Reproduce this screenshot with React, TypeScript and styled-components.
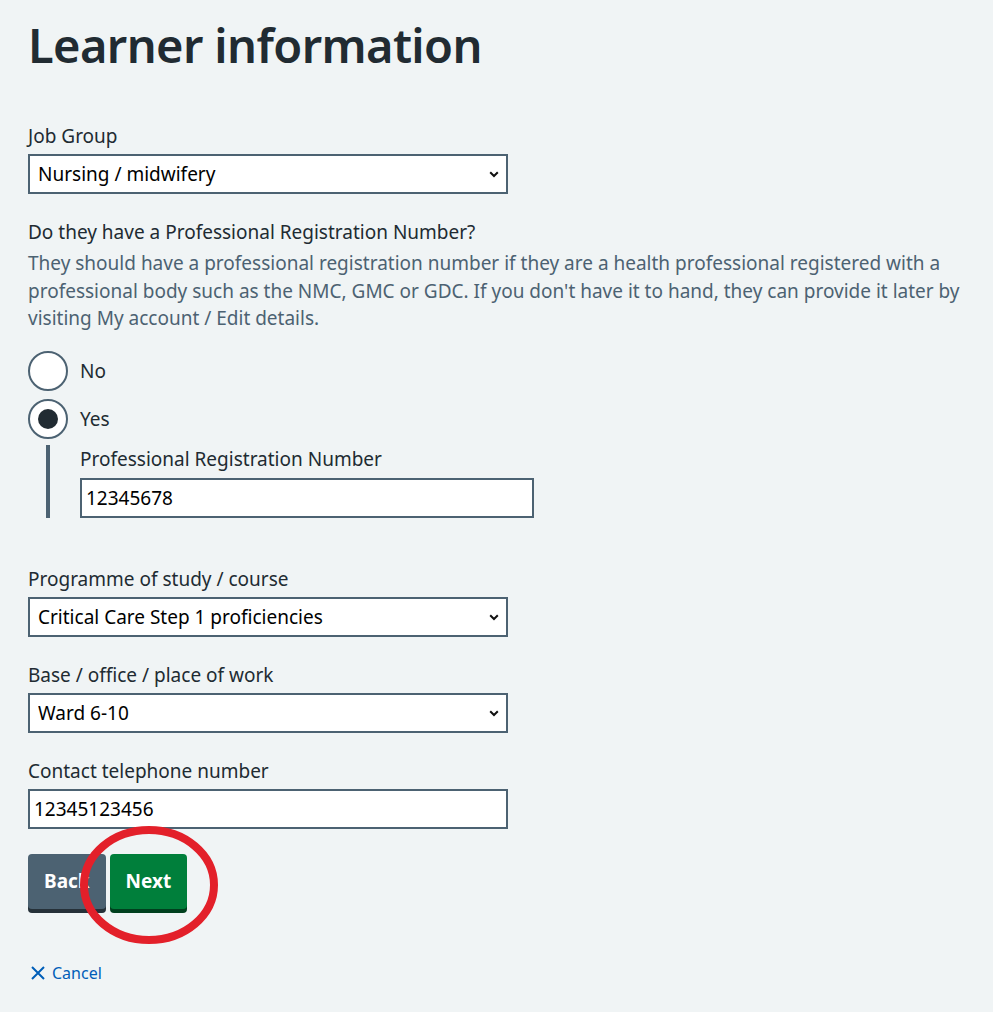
import React, { FC } from "react";
import styled, { createGlobalStyle } from "styled-components";

const GlobalStyle = createGlobalStyle`
  html, body {
    margin: 0;
    padding: 0;
    background: #f0f4f5;
  }
  body {
    font-family: "Noto Sans", "Open Sans", Arial, sans-serif;
    color: #212b32;
  }
`;

const Page = styled.main`
  position: relative;
  padding: 17px 28px 30px 28px;
  min-height: 965px;
`;

const Heading = styled.h1`
  margin: 0 0 49px 0;
  font-size: 47px;
  line-height: 56px;
  font-weight: 600;
  letter-spacing: -0.6px;
  color: #212b32;
`;

const FormGroup = styled.div<{ $gap?: number }>`
  margin-bottom: ${(p) => p.$gap ?? 24}px;
`;

const Label = styled.label`
  display: block;
  font-size: 19px;
  line-height: 28px;
  margin-bottom: 4px;
  color: #212b32;
`;

const Legend = styled.div`
  font-size: 19px;
  line-height: 28px;
  margin-bottom: 4px;
`;

const Hint = styled.div`
  font-size: 19px;
  line-height: 27.5px;
  color: #4c6272;
  margin-bottom: 18px;
  max-width: 940px;
`;

const SelectWrap = styled.div<{ $width: number }>`
  position: relative;
  width: ${(p) => p.$width}px;
`;

const Select = styled.select`
  appearance: none;
  -webkit-appearance: none;
  display: block;
  width: 100%;
  height: 40px;
  box-sizing: border-box;
  border: 2px solid #4c6272;
  border-radius: 0;
  background: #ffffff;
  padding: 0 30px 0 8px;
  font-family: "Noto Sans", "Open Sans", Arial, sans-serif;
  font-size: 19px;
  color: #000000;
`;

const Chevron = styled.svg`
  position: absolute;
  right: 9px;
  top: 17px;
  width: 10px;
  height: 7px;
  pointer-events: none;
`;

const TextInput = styled.input<{ $width: number }>`
  display: block;
  width: ${(p) => p.$width}px;
  height: 40px;
  box-sizing: border-box;
  border: 2px solid #4c6272;
  border-radius: 0;
  background: #ffffff;
  padding: 0 4px;
  font-family: "Noto Sans", "Open Sans", Arial, sans-serif;
  font-size: 19px;
  color: #000000;
`;

const Radios = styled.div`
  display: flex;
  flex-direction: column;
  gap: 8px;
`;

const RadioItem = styled.label`
  display: flex;
  align-items: center;
  gap: 12px;
  font-size: 19px;
  line-height: 28px;
`;

const RadioCircle = styled.span<{ $checked?: boolean }>`
  width: 40px;
  height: 40px;
  box-sizing: border-box;
  border: 2px solid #4c6272;
  border-radius: 50%;
  background: #ffffff;
  display: flex;
  align-items: center;
  justify-content: center;
  flex-shrink: 0;

  &::after {
    content: "";
    width: 20px;
    height: 20px;
    border-radius: 50%;
    background: #212b32;
    display: ${(p) => (p.$checked ? "block" : "none")};
  }
`;

const Conditional = styled.div`
  margin: 8px 0 0 18px;
  padding: 0 0 0 30px;
  border-left: 4px solid #4c6272;

  & ${Label} {
    margin-top: -2px;
    margin-bottom: 5px;
  }
`;

const ButtonRow = styled.div`
  display: flex;
  gap: 4px;
  margin-top: 25px;
  margin-bottom: 48px;
`;

const Button = styled.button<{ $variant: "primary" | "secondary" }>`
  font-family: "Noto Sans", "Open Sans", Arial, sans-serif;
  font-size: 19px;
  font-weight: 700;
  line-height: 28px;
  color: #ffffff;
  border: 0;
  border-radius: 4px;
  padding: 13px 16px 14px 16px;
  background: ${(p) => (p.$variant === "primary" ? "#007f3b" : "#4c6272")};
  box-shadow: 0 4px 0
    ${(p) => (p.$variant === "primary" ? "#00401e" : "#263139")};
  margin-bottom: 4px;
  cursor: pointer;
`;

const CancelLink = styled.a`
  display: inline-flex;
  align-items: center;
  gap: 6px;
  margin-left: 2px;
  font-size: 16px;
  line-height: 24px;
  color: #005eb8;
  text-decoration: none;
`;

const Annotation = styled.svg`
  position: absolute;
  left: 78px;
  top: 824px;
  width: 142px;
  height: 122px;
  pointer-events: none;
`;

const options = {
  job: "Nursing / midwifery",
  course: "Critical Care Step 1 proficiencies",
  base: "Ward 6-10",
};

const SelectField: FC<{ value: string; width: number }> = ({ value, width }) => (
  <SelectWrap $width={width}>
    <Select defaultValue={value}>
      <option>{value}</option>
    </Select>
    <Chevron viewBox="0 0 10 7">
      <path
        d="M1.2 1.2l3.8 3.8 3.8-3.8"
        fill="none"
        stroke="#111"
        strokeWidth="2"
      />
    </Chevron>
  </SelectWrap>
);

const App: FC = () => {
  return (
    <Page>
      <GlobalStyle />
      <Heading>Learner information</Heading>

      <FormGroup>
        <Label>Job Group</Label>
        <SelectField value={options.job} width={480} />
      </FormGroup>

      <FormGroup $gap={47}>
        <Legend>Do they have a Professional Registration Number?</Legend>
        <Hint>
          They should have a professional registration number if they are a
          health professional registered with a professional body such as the
          NMC, GMC or GDC. If you don't have it to hand, they can provide it
          later by visiting My account / Edit details.
        </Hint>
        <Radios>
          <RadioItem>
            <RadioCircle />
            No
          </RadioItem>
          <RadioItem>
            <RadioCircle $checked />
            Yes
          </RadioItem>
        </Radios>
        <Conditional>
          <Label>Professional Registration Number</Label>
          <TextInput $width={454} defaultValue="12345678" />
        </Conditional>
      </FormGroup>

      <FormGroup>
        <Label>Programme of study / course</Label>
        <SelectField value={options.course} width={480} />
      </FormGroup>

      <FormGroup>
        <Label>Base / office / place of work</Label>
        <SelectField value={options.base} width={480} />
      </FormGroup>

      <FormGroup $gap={0}>
        <Label>Contact telephone number</Label>
        <TextInput $width={480} defaultValue="12345123456" />
      </FormGroup>

      <ButtonRow>
        <Button $variant="secondary">Back</Button>
        <Button $variant="primary">Next</Button>
      </ButtonRow>

      <CancelLink href="#">
        <svg width="16" height="16" viewBox="0 0 16 16">
          <path
            d="M2 2l12 12M14 2L2 14"
            stroke="#005eb8"
            strokeWidth="2"
            fill="none"
          />
        </svg>
        Cancel
      </CancelLink>

      <Annotation viewBox="0 0 142 122">
        <ellipse
          cx="71"
          cy="61"
          rx="65"
          ry="55"
          fill="none"
          stroke="#e3202a"
          strokeWidth="8"
        />
      </Annotation>
    </Page>
  );
};

export default App;
